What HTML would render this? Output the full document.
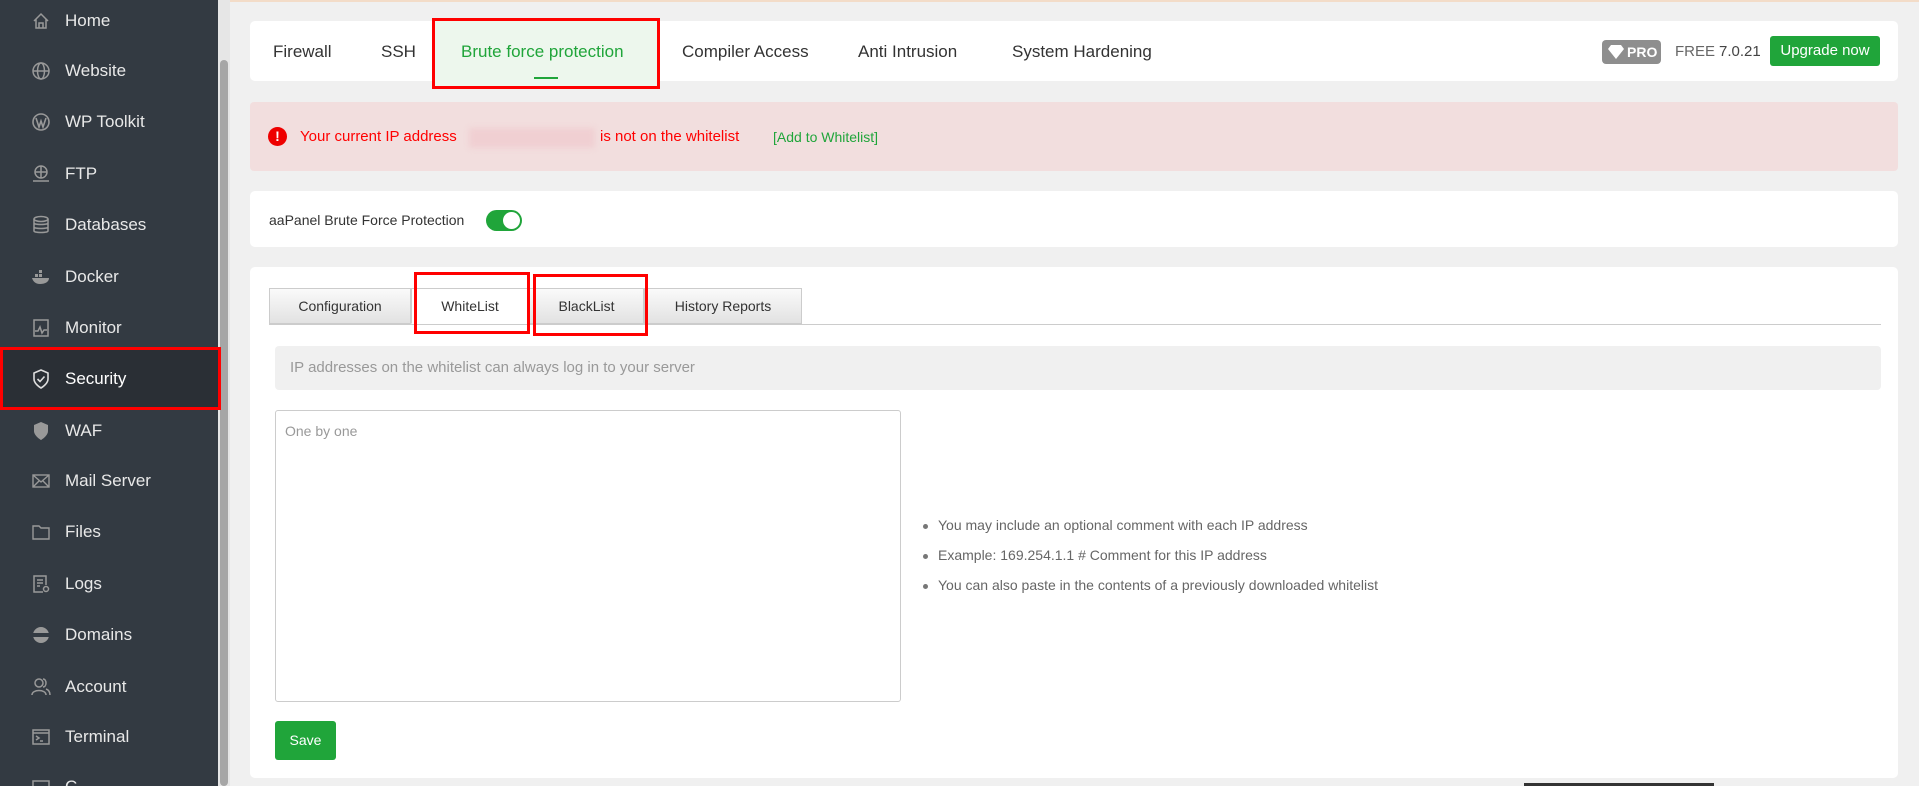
<!DOCTYPE html>
<html style="width:1919px;height:786px;overflow:hidden"><head><meta charset="utf-8"><style>
*{box-sizing:border-box;margin:0;padding:0}
body{width:1919px;height:786px;overflow:hidden;background:#f0f0f0;font-family:"Liberation Sans",sans-serif;position:relative}
.abs{position:absolute}
#side{left:0;top:0;width:218px;height:786px;background:#333a42}
#sb{left:218px;top:0;width:12px;height:786px;background:#e6e6e6}
#thumb{left:220px;top:60px;width:8px;height:726px;background:#a6a6a6;border-radius:4px}
.nav{position:absolute;left:0;width:218px;height:50px;color:#e8e8e8;font-size:17px;line-height:50px;padding-left:65px;overflow:hidden}
.nav svg{position:absolute;left:31px;top:15px}
.card{position:absolute;background:#fff;border-radius:5px}
.tab{position:absolute;top:42px;font-size:17px;color:#333}
.red{position:absolute;border:3px solid #f00}
.st{position:absolute;top:288px;height:36px;border:1px solid #ccc;background:linear-gradient(#fafafa,#e2e2e2);font-size:14px;color:#333;text-align:center;line-height:34px}
li{list-style:none;position:absolute;left:923px;font-size:14px;color:#666}
li:before{content:"";position:absolute;left:0;top:7px;width:5px;height:5px;border-radius:50%;background:#777}
li span{margin-left:15px}
</style></head><body>
<div class="abs" style="left:0;top:0;width:1919px;height:2px;background:#f3dcc8"></div>
<div id="side" class="abs"></div>
<div id="sb" class="abs"></div><div id="thumb" class="abs"></div>
<div class="nav" style="top:-4px"><svg width="20" height="20" viewBox="0 0 20 20" fill="none" stroke="#999" stroke-width="1.5"><path d="M3 10 L10 3 L17 10 M5 8 V17 H15 V8 M8 17 V12 H12 V17"/></svg>Home</div>
<div class="nav" style="top:46px"><svg width="20" height="20" viewBox="0 0 20 20" fill="none" stroke="#999" stroke-width="1.5"><circle cx="10" cy="10" r="8"/><ellipse cx="10" cy="10" rx="3.5" ry="8"/><path d="M2 10H18"/></svg>Website</div>
<div class="nav" style="top:97px"><svg width="20" height="20" viewBox="0 0 20 20" fill="none" stroke="#999" stroke-width="1.6"><circle cx="10" cy="10" r="8"/><path d="M5 6 L8 15 L10 9 L12 15 L15 6"/></svg>WP Toolkit</div>
<div class="nav" style="top:149px"><svg width="20" height="20" viewBox="0 0 20 20" fill="none" stroke="#999" stroke-width="1.5"><circle cx="10" cy="8" r="6"/><path d="M4 8H16M10 2V14M2 17H18"/></svg>FTP</div>
<div class="nav" style="top:200px"><svg width="20" height="20" viewBox="0 0 20 20" fill="none" stroke="#999" stroke-width="1.5"><ellipse cx="10" cy="4" rx="7" ry="2.5"/><path d="M3 4V16C3 18 17 18 17 16V4M3 8C3 10 17 10 17 8M3 12C3 14 17 14 17 12"/></svg>Databases</div>
<div class="nav" style="top:252px"><svg width="20" height="20" viewBox="0 0 20 20" fill="#999"><rect x="4" y="7" width="3" height="3"/><rect x="8" y="7" width="3" height="3"/><rect x="8" y="3" width="3" height="3"/><path d="M1 11H18C18 15 14 17 9 17C4 17 2 14 1 11Z"/></svg>Docker</div>
<div class="nav" style="top:303px"><svg width="20" height="20" viewBox="0 0 20 20" fill="none" stroke="#999" stroke-width="1.5"><rect x="3" y="2" width="14" height="16"/><path d="M4 13L7 13L9 9L11 15L13 12L16 12"/></svg>Monitor</div>
<div class="abs" style="left:3px;top:349px;width:215px;height:60px;background:#2a2f35"></div>
<div class="nav" style="top:354px;color:#fff"><svg width="20" height="20" viewBox="0 0 20 20" fill="none" stroke="#ddd" stroke-width="1.6"><path d="M10 1L17 4V10C17 15 10 19 10 19C10 19 3 15 3 10V4Z"/><path d="M6.5 10L9 12.5L13.5 7.5"/></svg>Security</div>
<div class="red" style="left:0;top:347px;width:221px;height:63px"></div>
<div class="nav" style="top:406px"><svg width="20" height="20" viewBox="0 0 20 20" fill="#999"><path d="M10 1L17 4V10C17 15 10 19 10 19C10 19 3 15 3 10V4Z"/></svg>WAF</div>
<div class="nav" style="top:456px"><svg width="20" height="20" viewBox="0 0 20 20" fill="none" stroke="#999" stroke-width="1.4"><rect x="2" y="4" width="16" height="12"/><path d="M2 4L10 11L18 4M2 16L8 10M18 16L12 10"/></svg>Mail Server</div>
<div class="nav" style="top:507px"><svg width="20" height="20" viewBox="0 0 20 20" fill="none" stroke="#999" stroke-width="1.4"><path d="M2 4H8L10 6H18V17H2Z"/></svg>Files</div>
<div class="nav" style="top:559px"><svg width="20" height="20" viewBox="0 0 20 20" fill="none" stroke="#999" stroke-width="1.5"><path d="M12 18H3V2H15V11M6 6H12M6 9H12M6 12H9"/><circle cx="15" cy="15" r="2.5"/></svg>Logs</div>
<div class="nav" style="top:610px"><svg width="20" height="20" viewBox="0 0 20 20" fill="#999"><circle cx="10" cy="10" r="8"/><rect x="1" y="8" width="18" height="4" fill="#333a42"/></svg>Domains</div>
<div class="nav" style="top:662px"><svg width="20" height="20" viewBox="0 0 20 20" fill="none" stroke="#999" stroke-width="1.5"><circle cx="8" cy="6" r="4"/><path d="M1 18C1 12 15 12 15 18M12 2C16 2 16 10 12 10M15 12C18 13 19 15 19 18"/></svg>Account</div>
<div class="nav" style="top:712px"><svg width="20" height="20" viewBox="0 0 20 20" fill="none" stroke="#999" stroke-width="1.5"><rect x="2" y="3" width="16" height="14"/><path d="M2 6H18M5 9L8 11L5 13M9 14H12"/></svg>Terminal</div>
<div class="nav" style="top:762px;height:24px"><svg width="20" height="20" viewBox="0 0 20 20" fill="none" stroke="#999" stroke-width="1.5"><rect x="2" y="4" width="16" height="14"/></svg>C</div>

<div class="card" style="left:250px;top:21px;width:1648px;height:60px"></div>
<div class="abs" style="left:432px;top:18px;width:226px;height:70px;background:#edf7ed"></div>
<div class="tab" style="left:273px">Firewall</div>
<div class="tab" style="left:381px">SSH</div>
<div class="tab" style="left:461px;color:#20a53a">Brute force protection</div>
<div class="abs" style="left:534px;top:77px;width:24px;height:2px;background:#20a53a"></div>
<div class="red" style="left:432px;top:18px;width:228px;height:71px"></div>
<div class="tab" style="left:682px">Compiler Access</div>
<div class="tab" style="left:858px">Anti Intrusion</div>
<div class="tab" style="left:1012px">System Hardening</div>
<div class="abs" style="left:1602px;top:40px;width:59px;height:24px;background:#8e8e8e;border-radius:4px;color:#fff;font-weight:bold;font-size:14px;line-height:24px;padding-left:25px"><svg class="abs" style="left:6px;top:5px" width="16" height="14" viewBox="0 0 16 14" fill="#fff"><path d="M3 0H13L16 4L8 14L0 4Z"/></svg>PRO</div>
<div class="abs" style="left:1675px;top:43px;font-size:15px;color:#666">FREE</div>
<div class="abs" style="left:1719px;top:43px;font-size:15px;color:#444">7.0.21</div>
<div class="abs" style="left:1770px;top:36px;width:110px;height:30px;background:#20a53a;border-radius:3px;color:#fff;font-size:15px;line-height:30px;text-align:center">Upgrade now</div>

<div class="abs" style="left:250px;top:102px;width:1648px;height:69px;background:#f2dede;border-radius:4px"></div>
<div class="abs" style="left:268px;top:127px;width:19px;height:19px;border-radius:50%;background:#e00;color:#fff;font-weight:bold;font-size:14px;text-align:center;line-height:19px">!</div>
<div class="abs" style="left:300px;top:128px;font-size:15px;color:#f00">Your current IP address</div>
<div class="abs" style="left:469px;top:128px;width:126px;height:20px;background:#f0cfd2;filter:blur(3px)"></div>
<div class="abs" style="left:600px;top:128px;font-size:15px;color:#f00">is not on the whitelist</div>
<div class="abs" style="left:773px;top:129px;font-size:14px;color:#20a53a">[Add to Whitelist]</div>

<div class="card" style="left:250px;top:191px;width:1648px;height:56px"></div>
<div class="abs" style="left:269px;top:212px;font-size:14px;color:#333">aaPanel Brute Force Protection</div>
<div class="abs" style="left:486px;top:210px;width:36px;height:21px;border-radius:11px;background:#20a53a"></div>
<div class="abs" style="left:503px;top:212px;width:17px;height:17px;border-radius:50%;background:#fff"></div>

<div class="card" style="left:250px;top:267px;width:1648px;height:511px"></div>
<div class="abs" style="left:269px;top:324px;width:1612px;height:1px;background:#ccc"></div>
<div class="st" style="left:269px;width:142px">Configuration</div>
<div class="st" style="left:411px;width:118px;background:#fff;border-bottom-color:#fff">WhiteList</div>
<div class="st" style="left:529px;width:115px">BlackList</div>
<div class="st" style="left:644px;width:158px">History Reports</div>
<div class="red" style="left:414px;top:272px;width:116px;height:62px"></div>
<div class="red" style="left:533px;top:274px;width:115px;height:62px"></div>
<div class="abs" style="left:275px;top:346px;width:1606px;height:44px;background:#f0f0f0;border-radius:4px;color:#999;font-size:15px;line-height:44px;padding-left:15px">IP addresses on the whitelist can always log in to your server</div>
<div class="abs" style="left:275px;top:410px;width:626px;height:292px;border:1px solid #ccc;border-radius:3px;color:#999;font-size:14px;padding:12px 9px">One by one</div>
<ul><li style="top:517px"><span>You may include an optional comment with each IP address</span></li>
<li style="top:547px"><span>Example: 169.254.1.1 # Comment for this IP address</span></li>
<li style="top:577px"><span>You can also paste in the contents of a previously downloaded whitelist</span></li></ul>
<div class="abs" style="left:275px;top:721px;width:61px;height:39px;background:#20a53a;border-radius:3px;color:#fff;font-size:14px;text-align:center;line-height:39px">Save</div>
<div class="abs" style="left:1524px;top:783px;width:190px;height:3px;background:#333"></div>
</body></html>
